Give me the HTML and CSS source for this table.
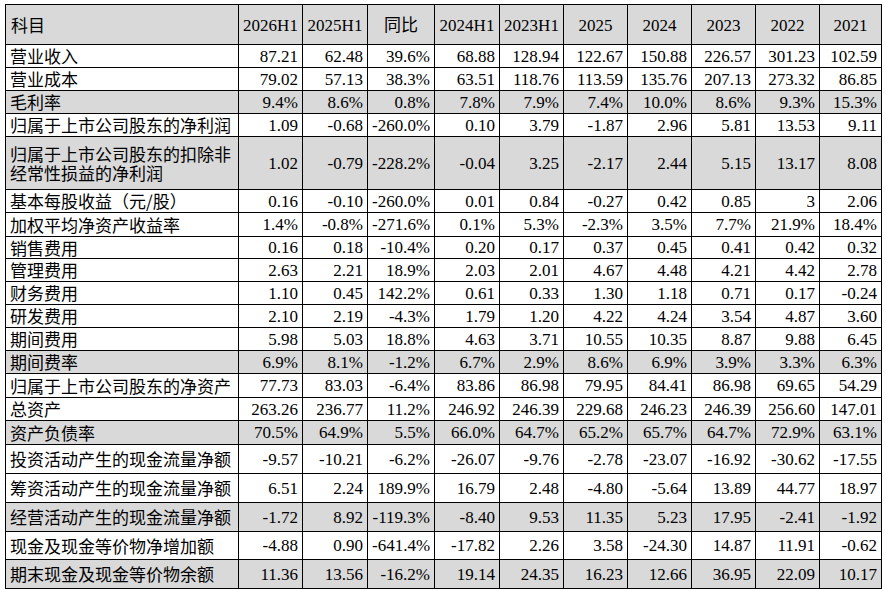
FILE: index.html
```html
<!DOCTYPE html>
<html lang="zh-CN">
<head>
<meta charset="utf-8">
<title>财务数据</title>
<link rel="stylesheet" href="styles.css">
</head>
<body>
<table class="fin">
  <colgroup>
    <col class="c-label"><col class="c64"><col class="c65"><col class="c67"><col class="c65"><col class="c64"><col class="c64"><col class="c64"><col class="c64"><col class="c64"><col class="c62">
  </colgroup>
  <thead>
    <tr class="head h40">
      <th class="lbl">科目</th><th>2026H1</th><th>2025H1</th><th>同比</th><th>2024H1</th><th>2023H1</th><th>2025</th><th>2024</th><th>2023</th><th>2022</th><th>2021</th>
    </tr>
  </thead>
  <tbody>
    <tr class="h23"><td class="lbl">营业收入</td><td>87.21</td><td>62.48</td><td>39.6%</td><td>68.88</td><td>128.94</td><td>122.67</td><td>150.88</td><td>226.57</td><td>301.23</td><td>102.59</td></tr>
    <tr class="h23"><td class="lbl">营业成本</td><td>79.02</td><td>57.13</td><td>38.3%</td><td>63.51</td><td>118.76</td><td>113.59</td><td>135.76</td><td>207.13</td><td>273.32</td><td>86.85</td></tr>
    <tr class="h23 gray"><td class="lbl">毛利率</td><td>9.4%</td><td>8.6%</td><td>0.8%</td><td>7.8%</td><td>7.9%</td><td>7.4%</td><td>10.0%</td><td>8.6%</td><td>9.3%</td><td>15.3%</td></tr>
    <tr class="h23"><td class="lbl">归属于上市公司股东的净利润</td><td>1.09</td><td>-0.68</td><td>-260.0%</td><td>0.10</td><td>3.79</td><td>-1.87</td><td>2.96</td><td>5.81</td><td>13.53</td><td>9.11</td></tr>
    <tr class="h53 gray"><td class="lbl two">归属于上市公司股东的扣除非经常性损益的净利润</td><td>1.02</td><td>-0.79</td><td>-228.2%</td><td>-0.04</td><td>3.25</td><td>-2.17</td><td>2.44</td><td>5.15</td><td>13.17</td><td>8.08</td></tr>
    <tr class="h23"><td class="lbl">基本每股收益（元/股）</td><td>0.16</td><td>-0.10</td><td>-260.0%</td><td>0.01</td><td>0.84</td><td>-0.27</td><td>0.42</td><td>0.85</td><td>3</td><td>2.06</td></tr>
    <tr class="h24"><td class="lbl">加权平均净资产收益率</td><td>1.4%</td><td>-0.8%</td><td>-271.6%</td><td>0.1%</td><td>5.3%</td><td>-2.3%</td><td>3.5%</td><td>7.7%</td><td>21.9%</td><td>18.4%</td></tr>
    <tr class="h22"><td class="lbl">销售费用</td><td>0.16</td><td>0.18</td><td>-10.4%</td><td>0.20</td><td>0.17</td><td>0.37</td><td>0.45</td><td>0.41</td><td>0.42</td><td>0.32</td></tr>
    <tr class="h23"><td class="lbl">管理费用</td><td>2.63</td><td>2.21</td><td>18.9%</td><td>2.03</td><td>2.01</td><td>4.67</td><td>4.48</td><td>4.21</td><td>4.42</td><td>2.78</td></tr>
    <tr class="h23"><td class="lbl">财务费用</td><td>1.10</td><td>0.45</td><td>142.2%</td><td>0.61</td><td>0.33</td><td>1.30</td><td>1.18</td><td>0.71</td><td>0.17</td><td>-0.24</td></tr>
    <tr class="h23"><td class="lbl">研发费用</td><td>2.10</td><td>2.19</td><td>-4.3%</td><td>1.79</td><td>1.20</td><td>4.22</td><td>4.24</td><td>3.54</td><td>4.87</td><td>3.60</td></tr>
    <tr class="h23"><td class="lbl">期间费用</td><td>5.98</td><td>5.03</td><td>18.8%</td><td>4.63</td><td>3.71</td><td>10.55</td><td>10.35</td><td>8.87</td><td>9.88</td><td>6.45</td></tr>
    <tr class="h23 gray"><td class="lbl">期间费率</td><td>6.9%</td><td>8.1%</td><td>-1.2%</td><td>6.7%</td><td>2.9%</td><td>8.6%</td><td>6.9%</td><td>3.9%</td><td>3.3%</td><td>6.3%</td></tr>
    <tr class="h24"><td class="lbl">归属于上市公司股东的净资产</td><td>77.73</td><td>83.03</td><td>-6.4%</td><td>83.86</td><td>86.98</td><td>79.95</td><td>84.41</td><td>86.98</td><td>69.65</td><td>54.29</td></tr>
    <tr class="h23"><td class="lbl">总资产</td><td>263.26</td><td>236.77</td><td>11.2%</td><td>246.92</td><td>246.39</td><td>229.68</td><td>246.23</td><td>246.39</td><td>256.60</td><td>147.01</td></tr>
    <tr class="h24 gray"><td class="lbl">资产负债率</td><td>70.5%</td><td>64.9%</td><td>5.5%</td><td>66.0%</td><td>64.7%</td><td>65.2%</td><td>65.7%</td><td>64.7%</td><td>72.9%</td><td>63.1%</td></tr>
    <tr class="h29"><td class="lbl">投资活动产生的现金流量净额</td><td>-9.57</td><td>-10.21</td><td>-6.2%</td><td>-26.07</td><td>-9.76</td><td>-2.78</td><td>-23.07</td><td>-16.92</td><td>-30.62</td><td>-17.55</td></tr>
    <tr class="h29"><td class="lbl">筹资活动产生的现金流量净额</td><td>6.51</td><td>2.24</td><td>189.9%</td><td>16.79</td><td>2.48</td><td>-4.80</td><td>-5.64</td><td>13.89</td><td>44.77</td><td>18.97</td></tr>
    <tr class="h29 gray"><td class="lbl">经营活动产生的现金流量净额</td><td>-1.72</td><td>8.92</td><td>-119.3%</td><td>-8.40</td><td>9.53</td><td>11.35</td><td>5.23</td><td>17.95</td><td>-2.41</td><td>-1.92</td></tr>
    <tr class="h28"><td class="lbl">现金及现金等价物净增加额</td><td>-4.88</td><td>0.90</td><td>-641.4%</td><td>-17.82</td><td>2.26</td><td>3.58</td><td>-24.30</td><td>14.87</td><td>11.91</td><td>-0.62</td></tr>
    <tr class="h29 gray"><td class="lbl">期末现金及现金等价物余额</td><td>11.36</td><td>13.56</td><td>-16.2%</td><td>19.14</td><td>24.35</td><td>16.23</td><td>12.66</td><td>36.95</td><td>22.09</td><td>10.17</td></tr>
  </tbody>
</table>
</body>
</html>
```
FILE: styles.css
```css
html, body {
  margin: 0;
  padding: 0;
  background: #ffffff;
}

body {
  padding: 4px 0 0 5px;
  font-family: "Liberation Serif", "Noto Sans CJK SC", serif;
  color: #000000;
}

.fin {
  border-collapse: collapse;
  table-layout: fixed;
  width: 877px;
  font-size: 17px;
  line-height: 18px;
}

.c-label { width: 233px; }
.c62 { width: 62px; }
.c64 { width: 64px; }
.c65 { width: 65px; }
.c67 { width: 67px; }

.fin th,
.fin td {
  border: 1px solid #000000;
  padding: 1px 4px 0 4px;
  text-align: right;
  vertical-align: middle;
  white-space: nowrap;
}

.fin th {
  font-weight: normal;
  text-align: center;
  padding: 2px 0 0 0;
}

.fin .lbl {
  text-align: left;
  padding: 0 2px 0 4px;
  font-family: "Noto Sans CJK SC", sans-serif;
  font-weight: normal;
  text-spacing-trim: space-all;
}

.fin th.lbl {
  padding-left: 5px;
}

.fin .two {
  white-space: normal;
  line-height: 19px;
}

.head,
.gray {
  background: #d9d9d9;
}

.h22 { height: 22px; }
.h23 { height: 23px; }
.h24 { height: 24px; }
.h28 { height: 28px; }
.h29 { height: 29px; }
.h40 { height: 40px; }
.h53 { height: 53px; }
```
